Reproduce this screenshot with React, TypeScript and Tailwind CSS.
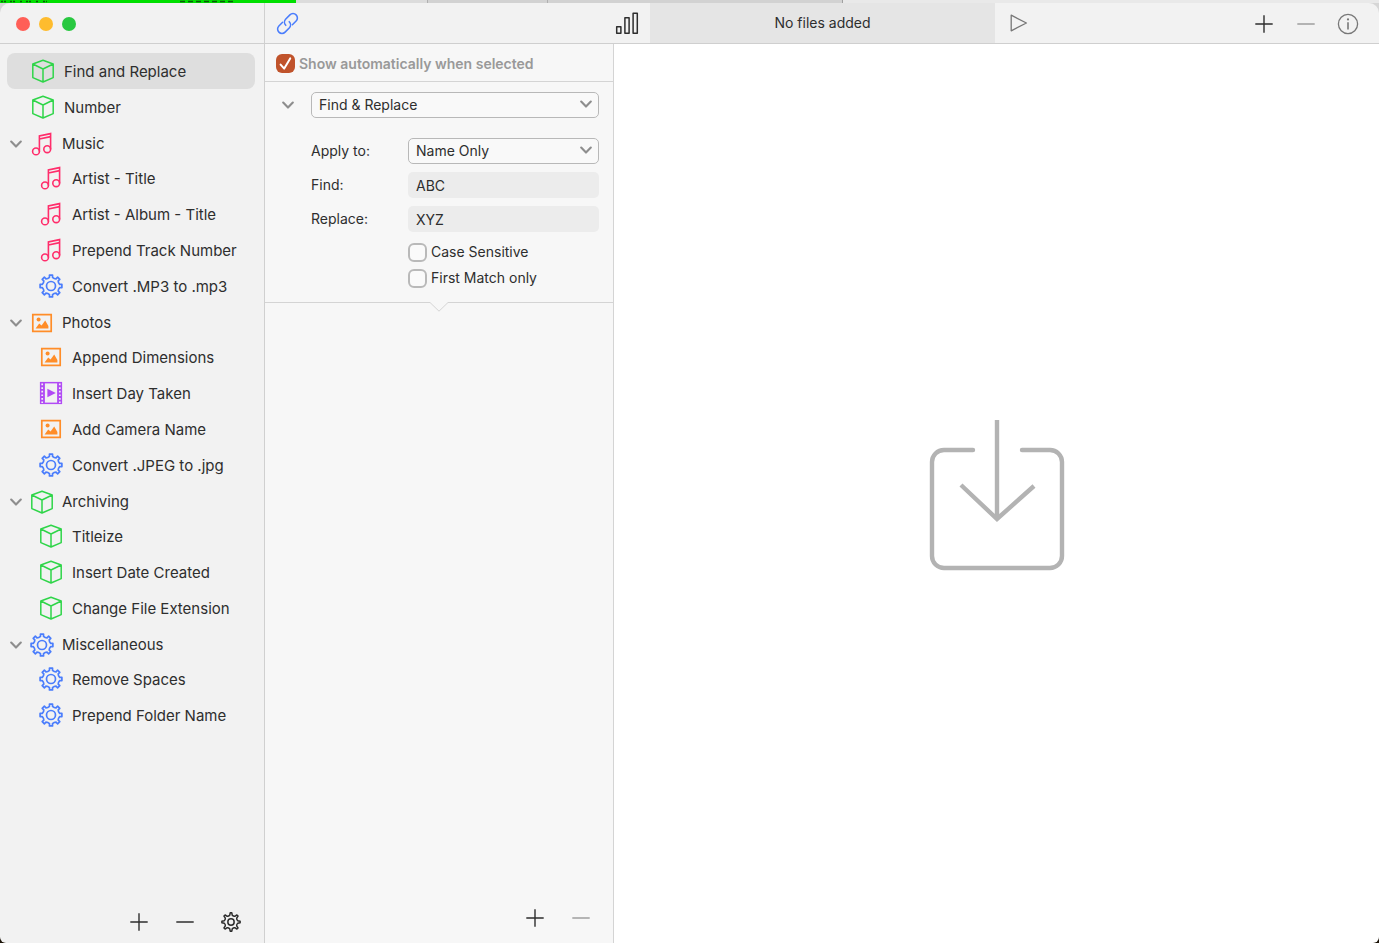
import React from "react";
import clsx from "clsx";

type IconName = "cube" | "music" | "gear" | "photo" | "film";

type Item = { label: string; icon: IconName };

type Group = Item & { items: Item[] };

const topItems: Item[] = [
  { label: "Find and Replace", icon: "cube" },
  { label: "Number", icon: "cube" },
];

const groups: Group[] = [
  {
    label: "Music",
    icon: "music",
    items: [
      { label: "Artist - Title", icon: "music" },
      { label: "Artist - Album - Title", icon: "music" },
      { label: "Prepend Track Number", icon: "music" },
      { label: "Convert .MP3 to .mp3", icon: "gear" },
    ],
  },
  {
    label: "Photos",
    icon: "photo",
    items: [
      { label: "Append Dimensions", icon: "photo" },
      { label: "Insert Day Taken", icon: "film" },
      { label: "Add Camera Name", icon: "photo" },
      { label: "Convert .JPEG to .jpg", icon: "gear" },
    ],
  },
  {
    label: "Archiving",
    icon: "cube",
    items: [
      { label: "Titleize", icon: "cube" },
      { label: "Insert Date Created", icon: "cube" },
      { label: "Change File Extension", icon: "cube" },
    ],
  },
  {
    label: "Miscellaneous",
    icon: "gear",
    items: [
      { label: "Remove Spaces", icon: "gear" },
      { label: "Prepend Folder Name", icon: "gear" },
    ],
  },
];

// outline of an eight tooth gear centred on 12,12
function gearPath(outer: number, inner: number, top: number, base: number) {
  const point = (r: number, deg: number) => {
    const a = (deg * Math.PI) / 180;
    return `${(12 + r * Math.sin(a)).toFixed(2)} ${(12 - r * Math.cos(a)).toFixed(2)}`;
  };
  let d = "";
  for (let i = 0; i < 8; i++) {
    const c = i * 45;
    d += `${i === 0 ? "M" : "L"}${point(inner, c - base)}`;
    d += `L${point(outer, c - top)}`;
    d += `L${point(outer, c + top)}`;
    d += `L${point(inner, c + base)}`;
    d += `Q${point(inner - 1, c + 22.5)} ${point(inner, c + 45 - base)}`;
  }
  return d + "Z";
}

const roundGear = gearPath(11, 8.8, 8, 10);
const sharpGear = gearPath(11, 8.2, 5, 11);

function CubeIcon() {
  return (
    <svg viewBox="0 0 24 24" className="size-6 text-[#2fd549]" fill="none" stroke="currentColor" strokeWidth="1.5" strokeLinejoin="round">
      <path d="M12 1.3 22.2 5V18.6L12 23 1.8 18.6V5ZM1.8 5 12 10 22.2 5M12 10V23" />
    </svg>
  );
}

function MusicIcon() {
  return (
    <svg viewBox="0 0 24 24" className="size-6 text-[#ff2d6b]" fill="none" stroke="currentColor" strokeWidth="1.6">
      <circle cx="6" cy="19.4" r="3.4" />
      <circle cx="17.2" cy="17.2" r="3.4" />
      <path d="M9.4 19.4V4L20.6 1.6V17.2M9.4 7 20.6 4.6" />
    </svg>
  );
}

function GearIcon() {
  return (
    <svg viewBox="0 0 24 24" className="size-6 text-[#4a7dfc]" fill="none" stroke="currentColor" strokeWidth="1.7" strokeLinejoin="round">
      <path d={roundGear} />
      <circle cx="12" cy="12" r="4.5" />
    </svg>
  );
}

function PhotoIcon() {
  return (
    <svg viewBox="0 0 24 24" className="size-6 text-[#ff8d28]" fill="none" stroke="currentColor" strokeWidth="1.7">
      <path d="M2.8 3.6H21.2V20.4H2.8Z" />
      <circle cx="8.6" cy="8.4" r="2" fill="currentColor" stroke="none" />
      <path d="M5.6 17.4 9.2 12.6 11.6 14.4 15.2 9.6 18.4 15V17.4Z" fill="currentColor" stroke="none" />
    </svg>
  );
}

function FilmIcon() {
  return (
    <svg viewBox="0 0 24 24" className="size-6 text-[#b14bf5]" fill="none" stroke="currentColor">
      <path d="M0.9 0.9H23.1V23.1H0.9Z" fill="currentColor" stroke="none" />
      <path d="M5.9 2.4H18.1V21.6H5.9Z" className="fill-[#f2f2f2]" stroke="none" />
      <path d="M3.2 2.6V22M20.8 2.6V22" className="stroke-[#f2f2f2]" strokeWidth="1.7" strokeDasharray="1.7 1.9" />
      <path d="M8.4 7.8 16.8 12 8.4 16.2Z" fill="currentColor" stroke="none" />
    </svg>
  );
}

const icons: Record<IconName, () => React.JSX.Element> = {
  cube: CubeIcon,
  music: MusicIcon,
  gear: GearIcon,
  photo: PhotoIcon,
  film: FilmIcon,
};

function Chevron({ className }: { className?: string }) {
  return (
    <svg viewBox="0 0 12 8" className={clsx("w-3 h-2", className)} fill="none" stroke="currentColor" strokeWidth="2.1" strokeLinecap="round" strokeLinejoin="round">
      <path d="M1.2 1.6 6 6.6 10.8 1.6" />
    </svg>
  );
}

function PlusIcon() {
  return (
    <svg viewBox="0 0 18 18" className="size-[18px]" stroke="currentColor" strokeWidth="1.4">
      <path d="M9 0.3V17.7M0.3 9H17.7" />
    </svg>
  );
}

function MinusIcon() {
  return (
    <svg viewBox="0 0 18 18" className="size-[18px]" stroke="currentColor" strokeWidth="1.4">
      <path d="M0.3 9H17.7" />
    </svg>
  );
}

function IconButton({ label, className, children }: { label: string; className?: string; children: React.ReactNode }) {
  return (
    <button type="button" aria-label={label} className={clsx("flex items-center justify-center", className)}>
      {children}
    </button>
  );
}

function SidebarItem({ item, nested, selected }: { item: Item; nested?: boolean; selected?: boolean }) {
  const Icon = icons[item.icon];
  return (
    <li>
      <button
        type="button"
        className={clsx(
          "flex h-9 w-full items-center gap-[9px] rounded-lg text-left",
          nested ? "pl-8" : "pl-6",
          selected && "bg-[#dedede]"
        )}
      >
        <Icon />
        <span className="pt-[2px]">{item.label}</span>
      </button>
    </li>
  );
}

function SidebarGroup({ group }: { group: Group }) {
  const Icon = icons[group.icon];
  return (
    <li>
      <button type="button" aria-expanded="true" className="flex h-[35px] w-full items-center pt-[2px] pl-[3px] text-left">
        <Chevron className="mr-2 text-[#8e8e8e]" />
        <Icon />
        <span className="pt-[2px] pl-2">{group.label}</span>
      </button>
      <ul>
        {group.items.map((item) => (
          <SidebarItem key={item.label} item={item} nested />
        ))}
      </ul>
    </li>
  );
}

function Sidebar() {
  return (
    <aside className="flex w-[265px] shrink-0 flex-col border-r border-[#d0d0d0] bg-[#f2f2f2]">
      <ul className="pt-[9px] pr-[9px] pl-[7px] text-[15px]">
        {topItems.map((item, i) => (
          <SidebarItem key={item.label} item={item} selected={i === 0} />
        ))}
        {groups.map((group) => (
          <SidebarGroup key={group.label} group={group} />
        ))}
      </ul>
      <div className="mt-auto flex h-[42px] justify-end pr-[10px]">
        <IconButton label="Add preset" className="w-[46px]">
          <PlusIcon />
        </IconButton>
        <IconButton label="Remove preset" className="w-[46px]">
          <MinusIcon />
        </IconButton>
        <IconButton label="Settings" className="w-[46px]">
          <svg viewBox="0 0 24 24" className="size-5" fill="none" stroke="currentColor" strokeWidth="1.8" strokeLinejoin="round">
            <path d={sharpGear} />
            <circle cx="12" cy="12" r="3.8" />
          </svg>
        </IconButton>
      </div>
    </aside>
  );
}

function Select({ id, value, label }: { id: string; value: string; label?: string }) {
  return (
    <div className="relative">
      <select
        id={id}
        aria-label={label}
        defaultValue={value}
        className="block h-[26px] w-full appearance-none rounded-[5px] border border-[#b8b8b8] bg-[#f9f9f9] px-[7px]"
      >
        <option>{value}</option>
      </select>
      <Chevron className="pointer-events-none absolute top-2 right-[7px] text-[#8e8e8e]" />
    </div>
  );
}

function Checkbox({ label }: { label: string }) {
  return (
    <label className="flex h-[26px] items-center gap-1">
      <input type="checkbox" className="size-[19px] appearance-none rounded-md border-2 border-[#b9b9b9] bg-[#fafafa]" />
      {label}
    </label>
  );
}

function ActionsPanel() {
  return (
    <section className="flex w-[349px] shrink-0 flex-col border-r border-[#d4d4d4] bg-[#f7f7f7] text-sm">
      <label className="flex h-[38px] items-center gap-1 border-b border-[#d4d4d4] pt-[2px] pl-[11px] font-semibold text-[#999]">
        <span className="relative">
          <input type="checkbox" defaultChecked className="block size-[19px] appearance-none rounded-md bg-[#c0532b]" />
          <svg viewBox="0 0 19 19" className="pointer-events-none absolute inset-0 size-[19px]" fill="none" stroke="white" strokeWidth="2" strokeLinecap="round" strokeLinejoin="round">
            <path d="M4.6 10.6 8.2 14.6 14.2 4.4" />
          </svg>
        </span>
        Show automatically when selected
      </label>

      <div className="flex pt-[10px] pr-[14px] pb-[11px]">
        <IconButton label="Collapse action" className="h-[26px] w-[46px] shrink-0 text-[#8e8e8e]">
          <Chevron />
        </IconButton>
        <div className="flex-1">
          <Select id="action" label="Action" value="Find & Replace" />
          <div className="mt-5 grid grid-cols-[97px_1fr] items-center gap-y-2">
            <label htmlFor="apply-to">Apply to:</label>
            <Select id="apply-to" value="Name Only" />
            <label htmlFor="find">Find:</label>
            <input id="find" defaultValue="ABC" className="h-[26px] min-w-0 rounded-[5px] bg-[#ececec] px-2" />
            <label htmlFor="replace">Replace:</label>
            <input id="replace" defaultValue="XYZ" className="h-[26px] min-w-0 rounded-[5px] bg-[#ececec] px-2" />
          </div>
          <div className="mt-[7px] pl-[97px]">
            <Checkbox label="Case Sensitive" />
            <Checkbox label="First Match only" />
          </div>
        </div>
      </div>

      {/* divider with the notch that points to the next action */}
      <div className="flex">
        <div className="flex-1 border-t border-[#d4d4d4]" />
        <svg viewBox="0 0 20 10" className="h-[10px] w-5" fill="none" stroke="#d4d4d4">
          <path d="M0 0.5H1L10 9.2 19 0.5H20" />
        </svg>
        <div className="flex-1 border-t border-[#d4d4d4]" />
      </div>

      <div className="mt-auto flex h-[50px] justify-end pr-[9px]">
        <IconButton label="Add action" className="w-[46px]">
          <PlusIcon />
        </IconButton>
        <IconButton label="Remove action" className="w-[46px] text-[#999]">
          <MinusIcon />
        </IconButton>
      </div>
    </section>
  );
}

function TitleBar() {
  return (
    <header className="flex h-[41px] rounded-t-[10px] border-b border-[#cfcfcf] bg-[#f2f2f2]">
      <div className="flex w-[265px] shrink-0 items-center gap-[9px] border-r border-[#d0d0d0] pt-[2px] pl-4">
        <button type="button" aria-label="Close" className="size-[14px] rounded-full bg-[#ff5f57]" />
        <button type="button" aria-label="Minimize" className="size-[14px] rounded-full bg-[#febc2e]" />
        <button type="button" aria-label="Zoom" className="size-[14px] rounded-full bg-[#28c840]" />
      </div>
      <div className="flex w-[385px] shrink-0 items-center justify-between pr-[11px] pl-[11px]">
        <IconButton label="Presets" className="text-[#4a7dfc]">
          <svg viewBox="0 0 24 24" className="size-[23px]" fill="none" stroke="currentColor" strokeWidth="1.6" strokeLinecap="round">
            <path d="M10.2 13.9a4.600 4.600 0 0 1-.2-6.300l4.500-4.600a4.500 4.500 0 0 1 6.500 0 4.500 4.500 0 0 1 0 6.400l-3.900 3.900" />
            <path d="M13.8 10.1a4.600 4.600 0 0 1 .2 6.300l-4.500 4.600a4.500 4.500 0 0 1-6.500 0 4.500 4.500 0 0 1 0-6.400l3.900-3.900" />
          </svg>
        </IconButton>
        <IconButton label="Statistics">
          <svg viewBox="0 0 24 24" className="size-6" fill="none" stroke="currentColor" strokeWidth="1.5" strokeLinejoin="round">
            <path d="M1.7 15.7H5.900V22.3H1.7ZM9.900 6.700H14.100V22.3H9.900ZM18.100 2.200H22.3V22.3H18.100Z" />
          </svg>
        </IconButton>
      </div>
      <div className="flex w-[345px] items-center justify-center bg-[#e5e5e5] text-sm">No files added</div>
      <div className="flex flex-1 items-center justify-between pr-[10px] pl-[15px]">
        <IconButton label="Rename" className="text-[#777]">
          <svg viewBox="0 0 18 18" className="size-[18px]" fill="none" stroke="currentColor" strokeWidth="1.3" strokeLinejoin="round">
            <path d="M1.2 1.2 16.4 9 1.2 16.8Z" />
          </svg>
        </IconButton>
        <div className="flex pt-px">
          <IconButton label="Add files" className="w-[42px]">
            <PlusIcon />
          </IconButton>
          <IconButton label="Remove files" className="w-[42px] text-[#999]">
            <MinusIcon />
          </IconButton>
          <IconButton label="Info" className="w-[42px] text-[#777]">
            <svg viewBox="0 0 22 22" className="size-[22px]" fill="none" stroke="currentColor" strokeWidth="1.3">
              <circle cx="11" cy="11" r="9.6" />
              <path d="M11 9.2V16.4" strokeWidth="1.6" />
              <circle cx="11" cy="6.4" r="1.1" fill="currentColor" stroke="none" />
            </svg>
          </IconButton>
        </div>
      </div>
    </header>
  );
}

// sliver of the windows that lie behind this one
function Backdrop() {
  return (
    <div className="flex h-[3px] bg-[#e9e9e9]">
      <div className="w-[296px] bg-[#00e000]">
        <svg viewBox="0 0 296 3" className="h-[3px] w-[296px]" stroke="#0a5a0a" strokeWidth="1.5" fill="none">
          <path d="M1 1.5H6M10 1.500H15M20 1.500H22M26 1.500H31M36 1.500H38M43 1.500H47" strokeDasharray="2 1" />
          <path d="M180 1.500H234" strokeDasharray="5 3" />
        </svg>
      </div>
      <div className="w-[132px] border-r border-[#b0b0b0] bg-[#dcdcdc]" />
      <div className="w-[120px] border-r border-[#b0b0b0] bg-[#d2d2d2]" />
      <div className="w-[295px] border-r border-[#a0a0a0] bg-[#d2d2d2]" />
    </div>
  );
}

export default function App() {
  return (
    <div className="flex min-h-screen flex-col bg-white pr-[5px] pb-1 font-['Inter','Liberation_Sans',sans-serif] text-[#2e2e2e]">
      <Backdrop />
      <div className="bg-[#d6d6d6]">
        <TitleBar />
      </div>
      <div className="flex flex-1 bg-[#1c1408]">
        <div className="flex flex-1 overflow-hidden rounded-b-[6px]">
          <Sidebar />
          <ActionsPanel />
          <main className="flex flex-1 items-center justify-center bg-white pt-[2px] pl-px">
            <svg viewBox="0 0 138 152" className="h-[152px] w-[138px]" fill="none" stroke="#b3b3b3" strokeWidth="4.4">
              <path d="M45 31H16A12 12 0 0 0 4 43V137A12 12 0 0 0 16 149H122A12 12 0 0 0 134 137V43A12 12 0 0 0 122 31H94" strokeLinecap="round" />
              <path d="M69 1V100M33 66 69 100 106 67" />
            </svg>
          </main>
        </div>
      </div>
    </div>
  );
}
